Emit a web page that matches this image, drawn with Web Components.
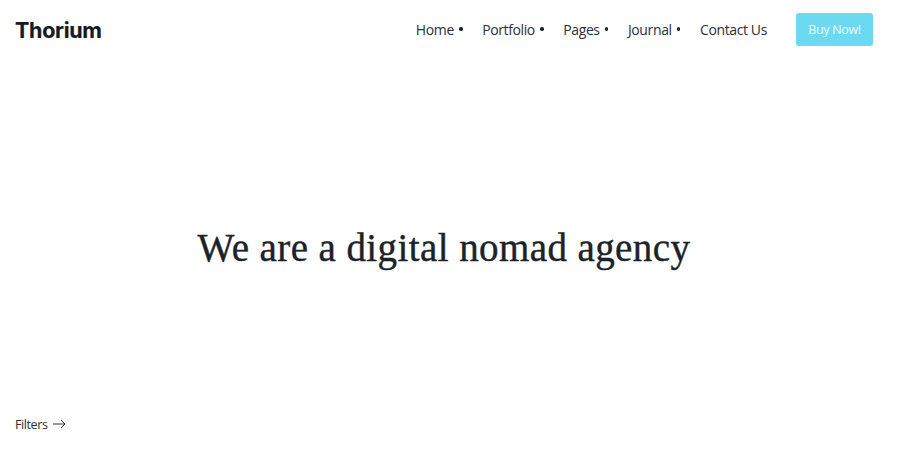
<!DOCTYPE html>
<html>
<head>
<meta charset="utf-8">
<title>Thorium</title>
<style>
    html, body { margin: 0; padding: 0; background: #fff; }
    body { width: 900px; height: 450px; overflow: hidden; }
</style>
</head>
<body>
<agency-page>
    <site-header slot="header">
        <nav-item caret>Home</nav-item>
        <nav-item caret>Portfolio</nav-item>
        <nav-item caret>Pages</nav-item>
        <nav-item caret>Journal</nav-item>
        <nav-item>Contact Us</nav-item>
    </site-header>
    <hero-title slot="hero">We are a digital nomad agency</hero-title>
    <filter-link slot="footer">Filters</filter-link>
</agency-page>
<script>
(function () {

    class AgencyPage extends HTMLElement {
        constructor() {
            super();
            const shadow = this.attachShadow({ mode: 'open' });
            shadow.innerHTML = `
            <style>
                :host {
                    display: grid;
                    grid-template-rows: 60px 1fr 50px;
                    height: 450px;
                    color: #1c2229;
                }
            </style>
            <slot name="header"></slot>
            <slot name="hero"></slot>
            <slot name="footer"></slot>
            `;
        }
    }

    class SiteHeader extends HTMLElement {
        constructor() {
            super();
            const shadow = this.attachShadow({ mode: 'open' });
            shadow.innerHTML = `
            <style>
                :host {
                    display: flex;
                    align-items: center;
                    justify-content: space-between;
                    padding: 0 27px 0 15px;
                }
                .logo {
                    font: 700 21.5px Inter, sans-serif;
                    letter-spacing: -0.3px;
                    -webkit-text-stroke: 0.2px #161b24;
                    color: #161b24;
                }
                nav {
                    display: flex;
                    align-items: center;
                    gap: 19.5px;
                    padding-bottom: 2px;
                }
                .buy {
                    margin-left: 9.5px;
                    width: 77px;
                    height: 33px;
                    display: flex;
                    align-items: center;
                    justify-content: center;
                    background: #6bd9f0;
                    color: #eefbfe;
                    border-radius: 3px;
                    font: 400 12.5px "Open Sans", sans-serif;
                    letter-spacing: -0.35px;
                }
            </style>
            <div class="logo">Thorium</div>
            <nav>
                <slot></slot>
                <div class="buy">Buy Now!</div>
            </nav>
            `;
        }
    }

    class NavItem extends HTMLElement {
        constructor() {
            super();
            const shadow = this.attachShadow({ mode: 'open' });
            shadow.innerHTML = `
            <style>
                :host {
                    display: inline-flex;
                    align-items: center;
                    font: 400 14px "Open Sans", sans-serif;
                    letter-spacing: -0.38px;
                    color: #2a3038;
                }
                .dot {
                    width: 3.3px;
                    height: 3.3px;
                    margin-left: 5.5px;
                    border-radius: 50%;
                    background: #1c2229;
                }
            </style>
            <slot></slot>
            `;
            if (this.hasAttribute('caret')) {
                const dot = document.createElement('span');
                dot.classList.add('dot');
                shadow.appendChild(dot);
            }
        }
    }

    class HeroTitle extends HTMLElement {
        constructor() {
            super();
            const shadow = this.attachShadow({ mode: 'open' });
            shadow.innerHTML = `
            <style>
                :host {
                    display: flex;
                    align-items: center;
                    justify-content: center;
                    padding: 34px 12px 0 0;
                    font: 400 39px "Liberation Serif", serif;
                    letter-spacing: 0.41px;
                    -webkit-text-stroke: 0.4px #1c2229;
                    color: #1c2229;
                }
            </style>
            <slot></slot>
            `;
        }
    }

    class FilterLink extends HTMLElement {
        constructor() {
            super();
            const shadow = this.attachShadow({ mode: 'open' });
            shadow.innerHTML = `
            <style>
                :host {
                    display: flex;
                    align-items: flex-start;
                    gap: 4.5px;
                    padding: 16px 0 0 15px;
                    font: 400 12.5px "Open Sans", sans-serif;
                    letter-spacing: -0.4px;
                    color: #2a3038;
                }
                svg { margin-top: 1px; }
            </style>
            <slot></slot>
            <svg width="14" height="14" viewBox="0 0 14 14" fill="none" stroke="#2a3038" stroke-width="1">
                <path d="M1 7H13M9 3l4 4-4 4"/>
            </svg>
            `;
        }
    }

    customElements.define('agency-page', AgencyPage);
    customElements.define('site-header', SiteHeader);
    customElements.define('nav-item', NavItem);
    customElements.define('hero-title', HeroTitle);
    customElements.define('filter-link', FilterLink);
})();
</script>
</body>
</html>
